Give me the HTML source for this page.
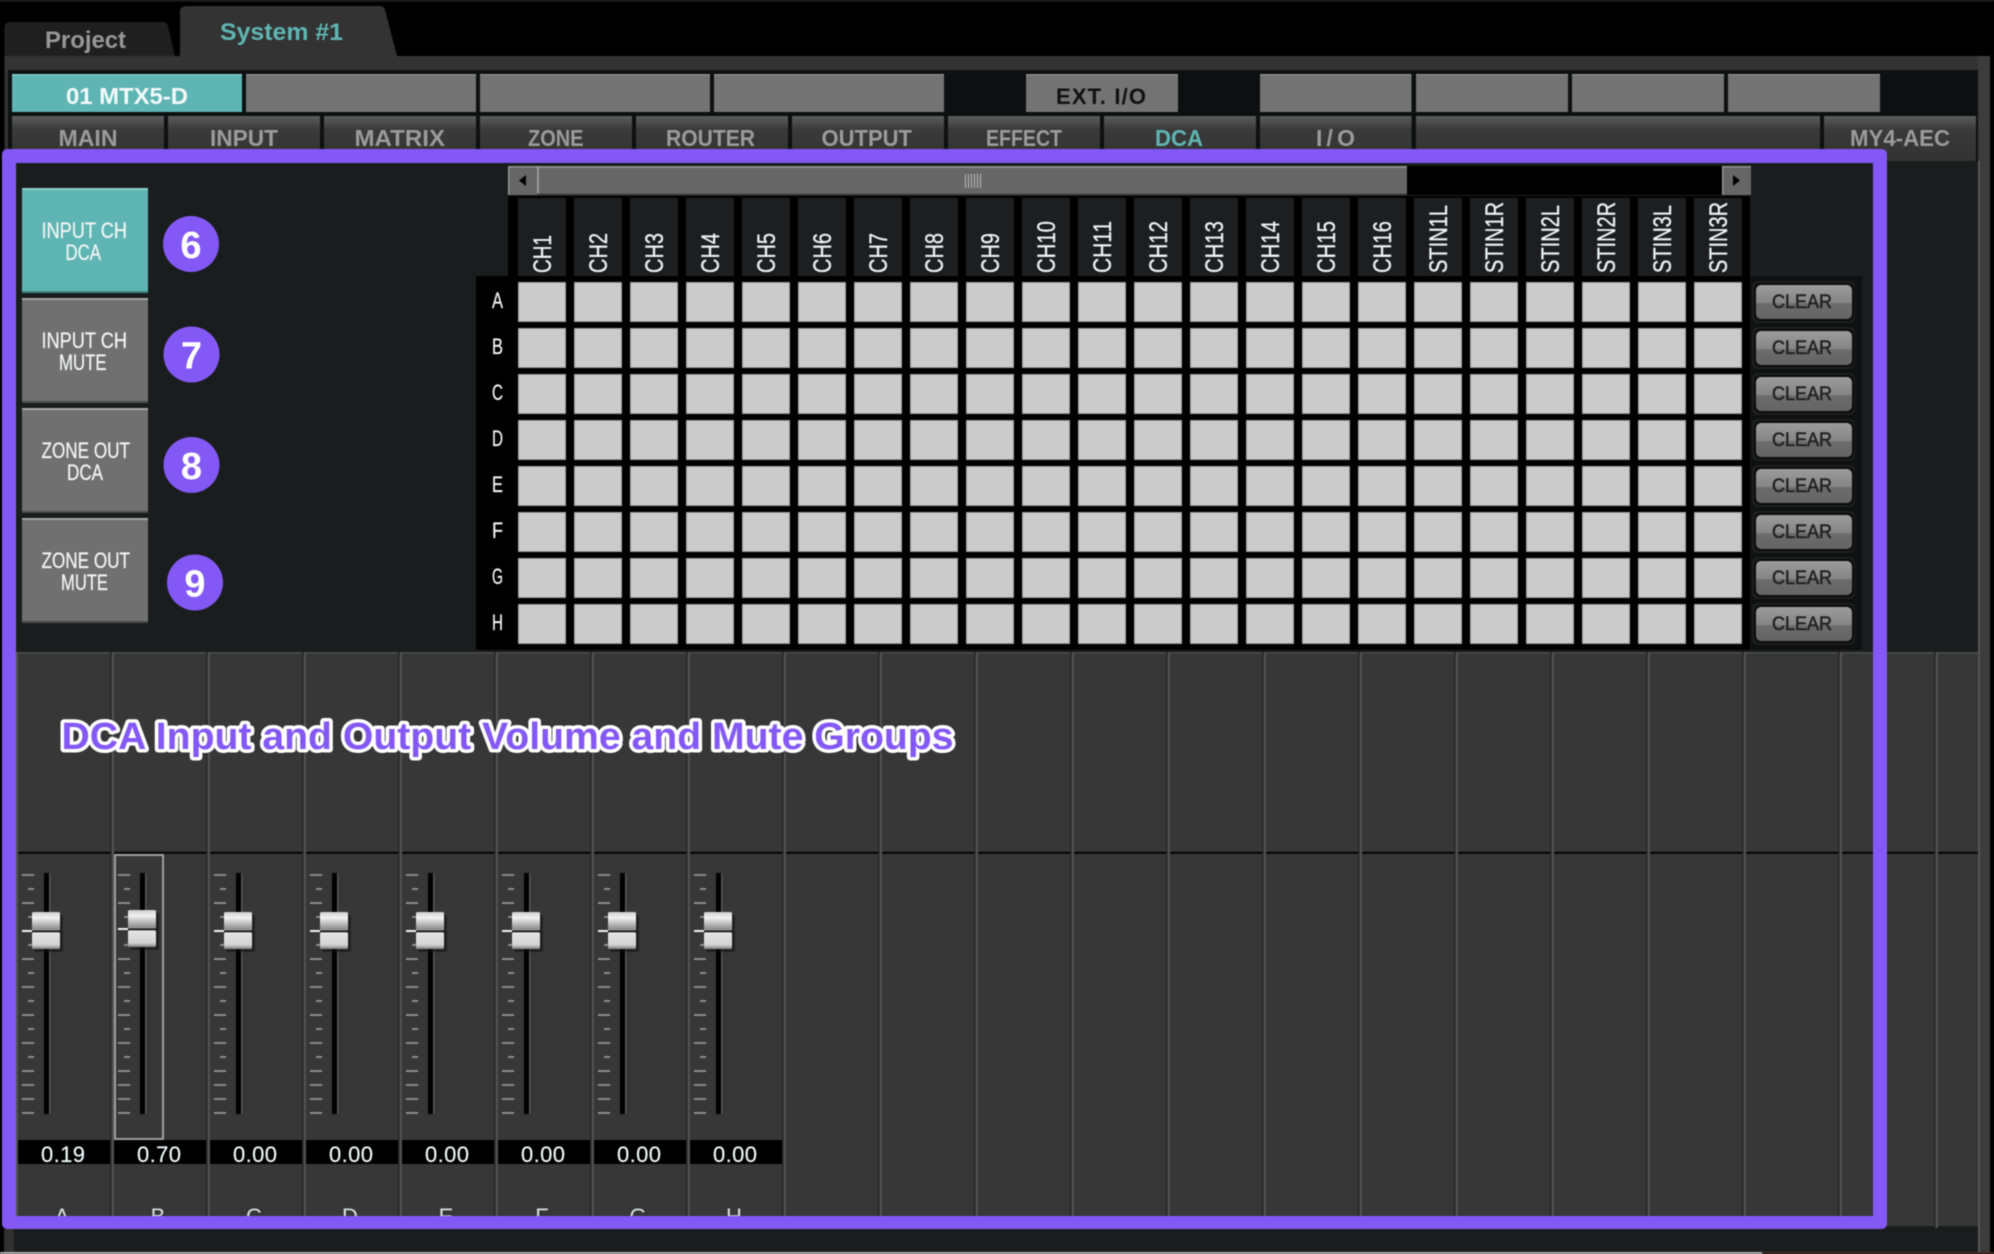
<!DOCTYPE html>
<html><head><meta charset="utf-8"><title>DCA</title>
<style>
html,body{margin:0;padding:0;background:#000;width:1994px;height:1254px;overflow:hidden}
svg{display:block;filter:blur(.45px)}
text{font-family:"Liberation Sans",sans-serif}
.b{font-weight:700}
.t{font-size:23px;font-weight:700;fill:#9b9b9b}
.l{font-size:22px;fill:#f2f5f5;stroke:#f2f5f5;stroke-width:.25px}
.h{font-size:25px;fill:#eaf2f4;stroke:#eaf2f4;stroke-width:.35px}
.c{font-size:19px;fill:#222;stroke:#222;stroke-width:.55px}
.v{font-size:22px;fill:#eef8fb;stroke:#eef8fb;stroke-width:.2px}
.n{font-size:38px;font-weight:700;fill:#fff;text-anchor:middle}
</style></head><body>
<svg xmlns="http://www.w3.org/2000/svg" width="1994" height="1254" viewBox="0 0 1994 1254">
<defs>
<linearGradient id="tabg" x1="0" y1="0" x2="0" y2="1"><stop offset="0" stop-color="#5c5c5c"/><stop offset=".3" stop-color="#3a3a3a"/><stop offset="1" stop-color="#333"/></linearGradient>
<linearGradient id="clr" x1="0" y1="0" x2="0" y2="1"><stop offset="0" stop-color="#9c9c9c"/><stop offset=".53" stop-color="#858585"/><stop offset=".54" stop-color="#6c6c6c"/><stop offset="1" stop-color="#646464"/></linearGradient>
<linearGradient id="capT" x1="0" y1="0" x2="0" y2="1"><stop offset="0" stop-color="#cfcfcf"/><stop offset=".3" stop-color="#f2f2f2"/><stop offset=".9" stop-color="#8e8e8e"/><stop offset="1" stop-color="#9c9c9c"/></linearGradient>
<linearGradient id="capB" x1="0" y1="0" x2="0" y2="1"><stop offset="0" stop-color="#e6e6e6"/><stop offset=".75" stop-color="#d2d2d2"/><stop offset="1" stop-color="#808080"/></linearGradient>
<pattern id="cell" patternUnits="userSpaceOnUse" x="518" y="282" width="56" height="46"><rect width="48" height="40" fill="#9a9a9a"/><rect x="1" y="1" width="46" height="38" fill="#cbcbcb"/></pattern>
<pattern id="hdr" patternUnits="userSpaceOnUse" x="518" y="198" width="56" height="78"><rect width="48" height="78" fill="#1c1e20"/></pattern>
<pattern id="div" patternUnits="userSpaceOnUse" x="14" y="652" width="96" height="600"><rect x="-1" width="2" height="600" fill="#252525"/><rect x="1" width="1" height="600" fill="#363636"/><rect x="2" width="2" height="600" fill="#525252"/></pattern>
<g id="fad">
<path d="M22 875H34M28 889H34M22 903H34M28 917H34M28 945H34M22 959H34M28 973H34M22 987H34M28 1001H34M22 1015H34M28 1029H34M22 1043H34M28 1057H34M22 1071H34M22 1085H34M22 1099H34M22 1113H34" stroke="#8a8a8a" stroke-width="2" fill="none"/>
<rect x="44" y="873" width="5" height="241" fill="#000"/><rect x="49" y="873" width="1.5" height="241" fill="#555"/>
</g>
<g id="cap">
<path d="M22 931H34" stroke="#f4f4f4" stroke-width="2"/>
<rect x="34" y="915" width="29" height="37" rx="2" fill="#111" opacity=".55"/>
<rect x="32" y="912" width="28" height="19" rx="1.5" fill="url(#capT)"/>
<rect x="32" y="930.5" width="28" height="1.8" fill="#111"/>
<rect x="32" y="932.3" width="28" height="16.7" rx="1.5" fill="url(#capB)"/>
</g>
<g id="cb"><rect x="1752" y="-1" width="103" height="42" rx="5" fill="#1d1e1f"/><rect x="1754" y="1" width="100" height="38" rx="6" fill="#0c0c0c"/><rect x="1756" y="3" width="96" height="34" rx="5" fill="url(#clr)"/></g>
</defs>

<rect width="1994" height="1254" fill="#000"/>
<rect width="1994" height="1.5" fill="#242424"/>
<!-- tabs -->
<path d="M4.5 56V27Q5 22 10 22H163Q167 22 168 26L175 56Z" fill="#1f1f1f"/>
<path d="M180 56V12Q180 6 187 6H380Q384 6 385 10L397 56Z" fill="#333"/>
<text x="45" y="48" class="b" font-size="24" fill="#979797" textLength="81" lengthAdjust="spacingAndGlyphs">Project</text>
<text x="220" y="40" class="b" font-size="24" fill="#5fb5b3" textLength="123" lengthAdjust="spacingAndGlyphs">System #1</text>
<rect x="4.5" y="56" width="1985.5" height="14" fill="#333"/>
<rect x="4.5" y="56" width="3.5" height="180" fill="#333"/>
<rect x="1978" y="56" width="12" height="1196" fill="#3c3c3c"/>
<rect x="1978" y="161" width="2" height="1091" fill="#555"/>
<rect x="8" y="70" width="1970" height="91" fill="#0d1011"/>
<rect x="8" y="161" width="1970" height="1091" fill="#1a1d1e"/>
<rect x="4" y="1229" width="10" height="23" fill="#303030"/>

<!-- row 1 -->
<rect x="12" y="74" width="230" height="38" fill="#5eb5b3"/><rect x="12" y="74" width="230" height="1.5" fill="#86cbc9"/>
<g fill="#737373">
<rect x="246" y="74" width="230" height="38"/><rect x="480" y="74" width="230" height="38"/><rect x="714" y="74" width="230" height="38"/>
<rect x="1026" y="74" width="152" height="38"/><rect x="1260" y="74" width="151.5" height="38"/><rect x="1416" y="74" width="152" height="38"/><rect x="1572" y="74" width="152" height="38"/><rect x="1728" y="74" width="152" height="38"/>
</g>
<g fill="#8a8a8a">
<rect x="246" y="74" width="230" height="1.5"/><rect x="480" y="74" width="230" height="1.5"/><rect x="714" y="74" width="230" height="1.5"/>
<rect x="1026" y="74" width="152" height="1.5"/><rect x="1260" y="74" width="151.5" height="1.5"/><rect x="1416" y="74" width="152" height="1.5"/><rect x="1572" y="74" width="152" height="1.5"/><rect x="1728" y="74" width="152" height="1.5"/>
</g>
<text x="66" y="104" class="b" font-size="23" fill="#f2f9f9" textLength="122" lengthAdjust="spacingAndGlyphs">01 MTX5-D</text>
<text x="1056" y="104" class="b" font-size="22" fill="#111" textLength="90" lengthAdjust="spacing">EXT. I/O</text>

<!-- row 2 -->
<g fill="url(#tabg)">
<rect x="12" y="116" width="152" height="45"/><rect x="168" y="116" width="152" height="45"/><rect x="324" y="116" width="152" height="45"/><rect x="480" y="116" width="152" height="45"/><rect x="636" y="116" width="152" height="45"/><rect x="792" y="116" width="152" height="45"/><rect x="948" y="116" width="152" height="45"/><rect x="1104" y="116" width="152" height="45"/><rect x="1260" y="116" width="151.5" height="45"/><rect x="1416" y="116" width="404" height="45"/><rect x="1824" y="116" width="152" height="45"/>
</g>
<text x="58.5" y="146" class="t" textLength="59" lengthAdjust="spacingAndGlyphs">MAIN</text>
<text x="210" y="146" class="t" textLength="68" lengthAdjust="spacingAndGlyphs">INPUT</text>
<text x="354.5" y="146" class="t" textLength="90.5" lengthAdjust="spacingAndGlyphs">MATRIX</text>
<text x="528" y="146" class="t" textLength="55.5" lengthAdjust="spacingAndGlyphs">ZONE</text>
<text x="666" y="146" class="t" textLength="89" lengthAdjust="spacingAndGlyphs">ROUTER</text>
<text x="821.5" y="146" class="t" textLength="90.5" lengthAdjust="spacingAndGlyphs">OUTPUT</text>
<text x="986" y="146" class="t" textLength="76" lengthAdjust="spacingAndGlyphs">EFFECT</text>
<text x="1155" y="146" class="t" style="fill:#5fb5b3" textLength="48" lengthAdjust="spacingAndGlyphs">DCA</text>
<text x="1316" y="146" class="t" textLength="39" lengthAdjust="spacing">I/O</text>
<text x="1850" y="146" class="t" textLength="100" lengthAdjust="spacingAndGlyphs">MY4-AEC</text>

<!-- left buttons -->
<rect x="22" y="188" width="126" height="105" fill="#5eb5b3"/><rect x="22" y="188" width="126" height="2" fill="#8ccdcb"/><rect x="22" y="291" width="126" height="2" fill="#3f8583"/>
<g fill="#707070"><rect x="22" y="298" width="126" height="105"/><rect x="22" y="408" width="126" height="105"/><rect x="22" y="518" width="126" height="105"/></g>
<g fill="#a6a6a6"><rect x="22" y="298" width="126" height="2"/><rect x="22" y="408" width="126" height="2"/><rect x="22" y="518" width="126" height="2"/></g>
<g fill="#4c4c4c"><rect x="22" y="401" width="126" height="2"/><rect x="22" y="511" width="126" height="2"/><rect x="22" y="621" width="126" height="2"/></g>
<text x="41.5" y="238" class="l" textLength="85.5" lengthAdjust="spacingAndGlyphs">INPUT CH</text>
<text x="65.5" y="260" class="l" textLength="35.5" lengthAdjust="spacingAndGlyphs">DCA</text>
<text x="41.5" y="348" class="l" textLength="85.5" lengthAdjust="spacingAndGlyphs">INPUT CH</text>
<text x="59" y="370" class="l" textLength="47.5" lengthAdjust="spacingAndGlyphs">MUTE</text>
<text x="41.5" y="458" class="l" textLength="88.5" lengthAdjust="spacingAndGlyphs">ZONE OUT</text>
<text x="67" y="480" class="l" textLength="36" lengthAdjust="spacingAndGlyphs">DCA</text>
<text x="41.5" y="568" class="l" textLength="88.5" lengthAdjust="spacingAndGlyphs">ZONE OUT</text>
<text x="61" y="590" class="l" textLength="47" lengthAdjust="spacingAndGlyphs">MUTE</text>

<!-- matrix -->
<rect x="508" y="196" width="1242" height="80" fill="#000"/>
<rect x="476" y="276" width="1274" height="374" fill="#000"/>
<rect x="1750" y="276" width="112" height="374" fill="#0e1112"/>
<rect x="518" y="198" width="1224" height="78" fill="url(#hdr)"/>
<rect x="518" y="282" width="1224" height="362" fill="url(#cell)"/>

<!-- scrollbar -->
<rect x="508" y="166" width="1243" height="29" fill="#000"/>
<rect x="508" y="166" width="29" height="29" fill="#666"/><rect x="508" y="166" width="29" height="1.5" fill="#929292"/><rect x="508" y="166" width="1.5" height="29" fill="#929292"/>
<rect x="537" y="166" width="870" height="29" fill="#666"/><rect x="537" y="166" width="870" height="2" fill="#8c8c8c"/><rect x="537" y="166" width="2" height="29" fill="#999"/><rect x="537" y="193.5" width="870" height="1.5" fill="#444"/>
<rect x="1722" y="166" width="29" height="29" fill="#666"/><rect x="1722" y="166" width="29" height="1.5" fill="#929292"/><rect x="1722" y="166" width="1.5" height="29" fill="#929292"/>
<path d="M526 175V186L519 180.5Z" fill="#000"/><path d="M1733 175V186L1740 180.5Z" fill="#000"/>
<path d="M965.5 174V188M968.5 174V188M971.5 174V188M974.5 174V188M977.5 174V188M980.5 174V188" stroke="#bbb" stroke-width="1" fill="none"/>

<!-- column headers -->
<text transform="translate(551,273) rotate(-90)" class="h" textLength="38" lengthAdjust="spacingAndGlyphs">CH1</text>
<text transform="translate(607,273) rotate(-90)" class="h" textLength="40" lengthAdjust="spacingAndGlyphs">CH2</text>
<text transform="translate(663,273) rotate(-90)" class="h" textLength="40" lengthAdjust="spacingAndGlyphs">CH3</text>
<text transform="translate(719,273) rotate(-90)" class="h" textLength="40" lengthAdjust="spacingAndGlyphs">CH4</text>
<text transform="translate(775,273) rotate(-90)" class="h" textLength="40" lengthAdjust="spacingAndGlyphs">CH5</text>
<text transform="translate(831,273) rotate(-90)" class="h" textLength="40" lengthAdjust="spacingAndGlyphs">CH6</text>
<text transform="translate(887,273) rotate(-90)" class="h" textLength="40" lengthAdjust="spacingAndGlyphs">CH7</text>
<text transform="translate(943,273) rotate(-90)" class="h" textLength="40" lengthAdjust="spacingAndGlyphs">CH8</text>
<text transform="translate(999,273) rotate(-90)" class="h" textLength="40" lengthAdjust="spacingAndGlyphs">CH9</text>
<text transform="translate(1055,273) rotate(-90)" class="h" textLength="52" lengthAdjust="spacingAndGlyphs">CH10</text>
<text transform="translate(1111,273) rotate(-90)" class="h" textLength="52" lengthAdjust="spacingAndGlyphs">CH11</text>
<text transform="translate(1167,273) rotate(-90)" class="h" textLength="52" lengthAdjust="spacingAndGlyphs">CH12</text>
<text transform="translate(1223,273) rotate(-90)" class="h" textLength="52" lengthAdjust="spacingAndGlyphs">CH13</text>
<text transform="translate(1279,273) rotate(-90)" class="h" textLength="52" lengthAdjust="spacingAndGlyphs">CH14</text>
<text transform="translate(1335,273) rotate(-90)" class="h" textLength="52" lengthAdjust="spacingAndGlyphs">CH15</text>
<text transform="translate(1391,273) rotate(-90)" class="h" textLength="52" lengthAdjust="spacingAndGlyphs">CH16</text>
<text transform="translate(1447,273) rotate(-90)" class="h" textLength="68" lengthAdjust="spacingAndGlyphs">STIN1L</text>
<text transform="translate(1503,273) rotate(-90)" class="h" textLength="71" lengthAdjust="spacingAndGlyphs">STIN1R</text>
<text transform="translate(1559,273) rotate(-90)" class="h" textLength="68" lengthAdjust="spacingAndGlyphs">STIN2L</text>
<text transform="translate(1615,273) rotate(-90)" class="h" textLength="71" lengthAdjust="spacingAndGlyphs">STIN2R</text>
<text transform="translate(1671,273) rotate(-90)" class="h" textLength="68" lengthAdjust="spacingAndGlyphs">STIN3L</text>
<text transform="translate(1727,273) rotate(-90)" class="h" textLength="71" lengthAdjust="spacingAndGlyphs">STIN3R</text>

<!-- row labels -->
<text x="492" y="308" class="l" textLength="11" lengthAdjust="spacingAndGlyphs">A</text>
<text x="492" y="354" class="l" textLength="11" lengthAdjust="spacingAndGlyphs">B</text>
<text x="492" y="400" class="l" textLength="11" lengthAdjust="spacingAndGlyphs">C</text>
<text x="492" y="446" class="l" textLength="11" lengthAdjust="spacingAndGlyphs">D</text>
<text x="492" y="492" class="l" textLength="11" lengthAdjust="spacingAndGlyphs">E</text>
<text x="492" y="538" class="l" textLength="11" lengthAdjust="spacingAndGlyphs">F</text>
<text x="492" y="584" class="l" textLength="11" lengthAdjust="spacingAndGlyphs">G</text>
<text x="492" y="630" class="l" textLength="11" lengthAdjust="spacingAndGlyphs">H</text>

<!-- clear buttons -->
<use href="#cb" y="282"/><use href="#cb" y="328"/><use href="#cb" y="374"/><use href="#cb" y="420"/><use href="#cb" y="466"/><use href="#cb" y="512"/><use href="#cb" y="558"/><use href="#cb" y="604"/>
<text x="1772" y="308" class="c" textLength="60" lengthAdjust="spacingAndGlyphs">CLEAR</text>
<text x="1772" y="354" class="c" textLength="60" lengthAdjust="spacingAndGlyphs">CLEAR</text>
<text x="1772" y="400" class="c" textLength="60" lengthAdjust="spacingAndGlyphs">CLEAR</text>
<text x="1772" y="446" class="c" textLength="60" lengthAdjust="spacingAndGlyphs">CLEAR</text>
<text x="1772" y="492" class="c" textLength="60" lengthAdjust="spacingAndGlyphs">CLEAR</text>
<text x="1772" y="538" class="c" textLength="60" lengthAdjust="spacingAndGlyphs">CLEAR</text>
<text x="1772" y="584" class="c" textLength="60" lengthAdjust="spacingAndGlyphs">CLEAR</text>
<text x="1772" y="630" class="c" textLength="60" lengthAdjust="spacingAndGlyphs">CLEAR</text>

<!-- strips -->
<rect x="14" y="652" width="1964" height="574" fill="#373737"/>
<rect x="14" y="652" width="1964" height="1.5" fill="#4c4c4c"/>
<rect x="14" y="851.5" width="1964" height="2.5" fill="#0c0c0c"/>
<rect x="14" y="652" width="1964" height="576" fill="url(#div)"/>

<use href="#fad"/><use href="#fad" x="96"/><use href="#fad" x="192"/><use href="#fad" x="288"/><use href="#fad" x="384"/><use href="#fad" x="480"/><use href="#fad" x="576"/><use href="#fad" x="672"/>
<use href="#cap"/><use href="#cap" x="96" y="-2"/><use href="#cap" x="192"/><use href="#cap" x="288"/><use href="#cap" x="384"/><use href="#cap" x="480"/><use href="#cap" x="576"/><use href="#cap" x="672"/>
<rect x="115" y="855" width="48" height="284" fill="none" stroke="#a0a0a0" stroke-width="2"/>

<g fill="#000">
<rect x="18" y="1140" width="92" height="24"/><rect x="114" y="1140" width="92" height="24"/><rect x="210" y="1140" width="92" height="24"/><rect x="306" y="1140" width="92" height="24"/><rect x="402" y="1140" width="92" height="24"/><rect x="498" y="1140" width="92" height="24"/><rect x="594" y="1140" width="92" height="24"/><rect x="690" y="1140" width="92" height="24"/>
</g>
<text x="41" y="1162" class="v" textLength="44">0.19</text>
<text x="137" y="1162" class="v" textLength="44">0.70</text>
<text x="233" y="1162" class="v" textLength="44">0.00</text>
<text x="329" y="1162" class="v" textLength="44">0.00</text>
<text x="425" y="1162" class="v" textLength="44">0.00</text>
<text x="521" y="1162" class="v" textLength="44">0.00</text>
<text x="617" y="1162" class="v" textLength="44">0.00</text>
<text x="713" y="1162" class="v" textLength="44">0.00</text>
<g font-size="22" fill="#d8e0e0" text-anchor="middle">
<text x="62" y="1224">A</text><text x="158" y="1224">B</text><text x="254" y="1224">C</text><text x="350" y="1224">D</text><text x="446" y="1224">E</text><text x="542" y="1224">F</text><text x="638" y="1224">G</text><text x="734" y="1224">H</text>
</g>

<!-- purple frame -->
<path fill-rule="evenodd" fill="#8458f5" d="M8 149H1881Q1887 149 1887 155V1223Q1887 1229 1881 1229H8Q2 1229 2 1223V155Q2 149 8 149ZM16 163V1216H1873V163Z"/>

<!-- badges -->
<g fill="#8458f5"><circle cx="191" cy="244" r="28"/><circle cx="191.5" cy="354.5" r="28"/><circle cx="191.5" cy="465" r="28"/><circle cx="195" cy="582.5" r="28"/></g>
<text x="191" y="258" class="n">6</text>
<text x="191.5" y="368.5" class="n">7</text>
<text x="191.5" y="479" class="n">8</text>
<text x="195" y="596.5" class="n">9</text>

<!-- title -->
<text x="61.5" y="749" font-size="38" font-weight="700" fill="#8458f5" stroke="#fff" stroke-width="7" stroke-linejoin="round" paint-order="stroke" textLength="892" lengthAdjust="spacingAndGlyphs">DCA Input and Output Volume and Mute Groups</text>

<!-- bottom edge -->
<rect x="0" y="1252" width="1762" height="2" fill="#b4b4b4"/>
<rect x="1762" y="1252" width="232" height="2" fill="#4a2a22"/>
</svg>
</body></html>
